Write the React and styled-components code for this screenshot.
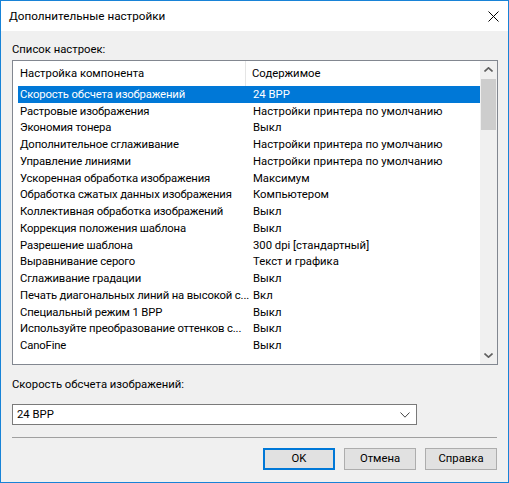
import React from 'react'
import styled, { createGlobalStyle } from 'styled-components'

const FONT = `Roboto, "Noto Sans", sans-serif`

const GlobalStyle = createGlobalStyle`
  html, body {
    margin: 0;
    padding: 0;
    background: #f0f0f0;
  }
  body {
    font-family: ${FONT};
    font-size: 11.3px;
    color: #000;
  }
`

// Dialog frame
const Window = styled.div`
  box-sizing: border-box;
  width: 509px;
  height: 483px;
  border: 1px solid #1883d7;
  background: #f0f0f0;
  display: flex;
  flex-direction: column;
  font-family: ${FONT};
  font-size: 11.3px;
`

const TitleBar = styled.div`
  height: 30px;
  background: #fff;
  display: flex;
  align-items: center;
  justify-content: space-between;
  padding: 0 9px 0 8px;
  flex-shrink: 0;
`

const Title = styled.span`
  font-size: 11.7px;
  line-height: 16px;
`

const CloseBtn = styled.div`
  width: 12px;
  height: 12px;
  display: flex;
  align-items: center;
  justify-content: center;
`

const Body = styled.div`
  flex: 1;
  display: flex;
  flex-direction: column;
  padding: 11px 11px 0 11px;
`

const Label = styled.div`
  line-height: 16px;
  height: 16px;
  margin-top: ${p => p.$top || 0}px;
`

// --------- list view -----------
const ListBox = styled.div`
  box-sizing: border-box;
  margin-top: 2px;
  width: 486px;
  height: 305px;
  border: 1px solid #828790;
  background: #fff;
  display: flex;
`

const ListContent = styled.div`
  flex: 1;
  display: flex;
  flex-direction: column;
  overflow: hidden;
`

const HeaderRow = styled.div`
  height: 25px;
  display: grid;
  grid-template-columns: 233px 1fr;
  flex-shrink: 0;
`

const HeaderCell = styled.div`
  padding-left: ${p => (p.$first ? 7 : 6)}px;
  padding-top: 1px;
  display: flex;
  align-items: center;
  border-right: ${p => (p.$first ? '1px solid #e5e5e5' : 'none')};
  line-height: 16px;
`

const Row = styled.div`
  height: 16.75px;
  margin-left: 5px;
  display: grid;
  grid-template-columns: 231px 1fr;
  align-items: center;
  background: ${p => (p.$selected ? '#0078d7' : 'transparent')};
  color: ${p => (p.$selected ? '#fff' : '#000')};
  flex-shrink: 0;
`

const Cell = styled.div`
  padding-left: ${p => (p.$value ? 4 : 2)}px;
  padding-top: 1px;
  white-space: nowrap;
  overflow: hidden;
  line-height: 16px;
  letter-spacing: ${p => (p.$value ? 0 : -0.15)}px;
`

const Scrollbar = styled.div`
  width: 17px;
  background: #f0f0f0;
  display: flex;
  flex-direction: column;
  flex-shrink: 0;
`

const ScrollArrow = styled.div`
  height: 17px;
  display: flex;
  align-items: center;
  justify-content: center;
`

const Track = styled.div`
  flex: 1;
  padding: 1px 1px 0;
`

const Thumb = styled.div`
  height: 51px;
  background: #cdcdcd;
`

// --------- combo + buttons -----------
const Combo = styled.div`
  box-sizing: border-box;
  margin-top: 11px;
  width: 405px;
  height: 21px;
  border: 1px solid #7a7a7a;
  background: #fff;
  display: flex;
  align-items: center;
  justify-content: space-between;
  padding: 0 6px 0 4px;
  line-height: 16px;
`

const Separator = styled.div`
  margin-top: 12px;
  width: 485px;
  height: 1px;
  background: #a0a0a0;
`

const ButtonRow = styled.div`
  margin-top: 10px;
  display: flex;
  justify-content: flex-end;
  gap: 9px;
`

const Button = styled.div`
  box-sizing: border-box;
  width: 72px;
  height: 22px;
  background: #e1e1e1;
  border: ${p => (p.$default ? '2px solid #0078d7' : '1px solid #adadad')};
  display: flex;
  align-items: center;
  justify-content: center;
  line-height: 16px;
`

const Chevron = ({ up, w = 9, h = 5, color = '#606060', sw = 1.6 }) => (
  <svg width={w} height={h} viewBox={`0 0 ${w} ${h}`}>
    <polyline
      points={up ? `0.5,${h - 0.5} ${w / 2},0.8 ${w - 0.5},${h - 0.5}` : `0.5,0.5 ${w / 2},${h - 0.8} ${w - 0.5},0.5`}
      fill="none"
      stroke={color}
      strokeWidth={sw}
    />
  </svg>
)

const settings = [
  ['Скорость обсчета изображений', '24 BPP'],
  ['Растровые изображения', 'Настройки принтера по умолчанию'],
  ['Экономия тонера', 'Выкл'],
  ['Дополнительное сглаживание', 'Настройки принтера по умолчанию'],
  ['Управление линиями', 'Настройки принтера по умолчанию'],
  ['Ускоренная обработка изображения', 'Максимум'],
  ['Обработка сжатых данных изображения', 'Компьютером'],
  ['Коллективная обработка изображений', 'Выкл'],
  ['Коррекция положения шаблона', 'Выкл'],
  ['Разрешение шаблона', '300 dpi [стандартный]'],
  ['Выравнивание серого', 'Текст и графика'],
  ['Сглаживание градации', 'Выкл'],
  ['Печать диагональных линий на высокой с...', 'Вкл'],
  ['Специальный режим 1 BPP', 'Выкл'],
  ['Используйте преобразование оттенков с...', 'Выкл'],
  ['CanoFine', 'Выкл'],
  ['', ''],
]

export default function App() {
  return (
    <>
      <GlobalStyle />
      <Window>
        <TitleBar>
          <Title>Дополнительные настройки</Title>
          <CloseBtn>
            <svg width="11" height="11" viewBox="0 0 11 11">
              <path d="M0.5 0.5 L10.5 10.5 M10.5 0.5 L0.5 10.5" stroke="#000" strokeWidth="1" />
            </svg>
          </CloseBtn>
        </TitleBar>
        <Body>
          <Label>Список настроек:</Label>
          <ListBox>
            <ListContent>
              <HeaderRow>
                <HeaderCell $first>Настройка компонента</HeaderCell>
                <HeaderCell>Содержимое</HeaderCell>
              </HeaderRow>
              {settings.map(([name, value], i) => (
                <Row key={i} $selected={i === 0}>
                  <Cell>{name}</Cell>
                  <Cell $value>{value}</Cell>
                </Row>
              ))}
            </ListContent>
            <Scrollbar>
              <ScrollArrow>
                <Chevron up />
              </ScrollArrow>
              <Track>
                <Thumb />
              </Track>
              <ScrollArrow>
                <Chevron />
              </ScrollArrow>
            </Scrollbar>
          </ListBox>
          <Label $top={12}>Скорость обсчета изображений:</Label>
          <Combo>
            <span>24 BPP</span>
            <Chevron w={10} h={6} color="#444" sw={1} />
          </Combo>
          <Separator />
          <ButtonRow>
            <Button $default>OK</Button>
            <Button>Отмена</Button>
            <Button>Справка</Button>
          </ButtonRow>
        </Body>
      </Window>
    </>
  )
}
